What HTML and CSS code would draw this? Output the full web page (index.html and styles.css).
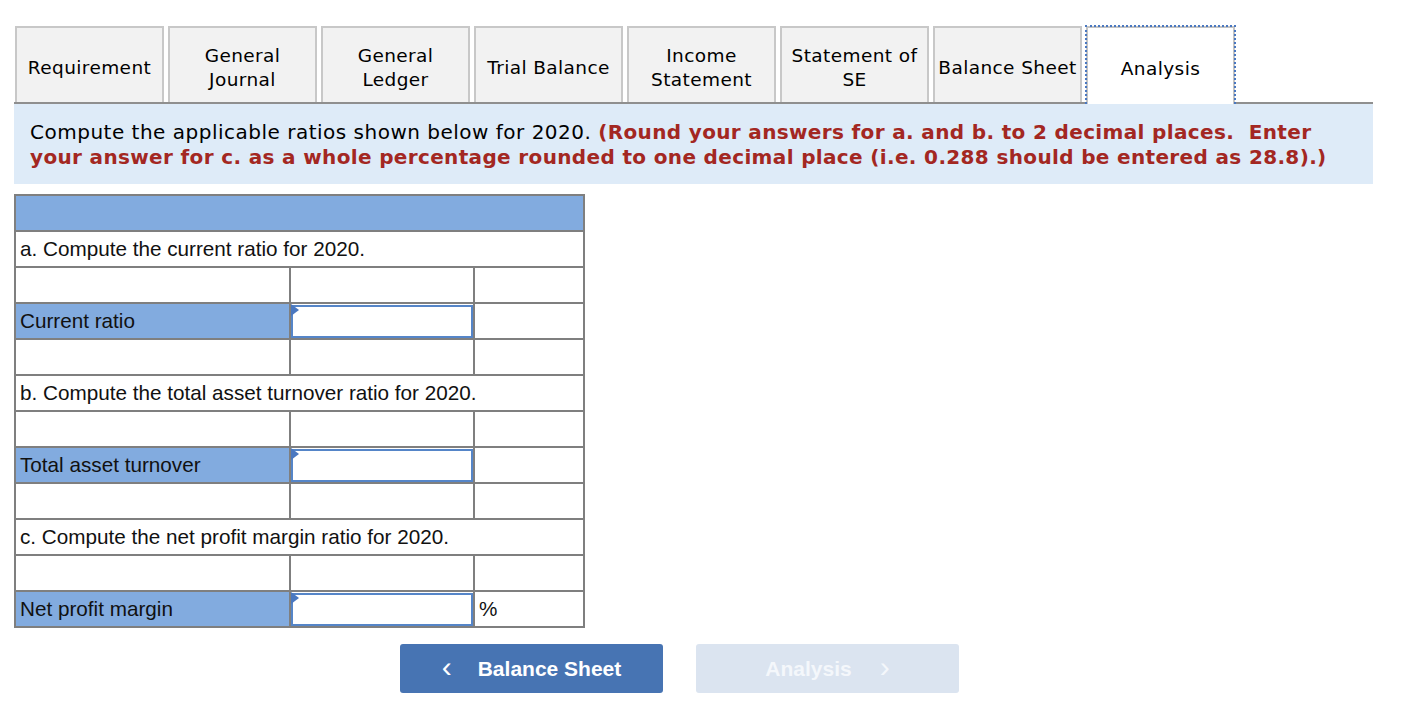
FILE: index.html
```html
<!DOCTYPE html>
<html>
<head>
<meta charset="utf-8">
<link rel="stylesheet" href="styles.css">
</head>
<body>
<div class="page">
  <div class="tabs">
    <div class="tab">Requirement</div>
    <div class="tab">General<br>Journal</div>
    <div class="tab">General<br>Ledger</div>
    <div class="tab">Trial Balance</div>
    <div class="tab">Income<br>Statement</div>
    <div class="tab">Statement of<br>SE</div>
    <div class="tab">Balance Sheet</div>
    <div class="tab active">Analysis</div>
  </div>
  <div class="instructions">
    Compute the applicable ratios shown below for 2020. <strong>(Round your answers for a. and b. to 2 decimal places.&nbsp; Enter your answer for c. as a whole percentage rounded to one decimal place (i.e. 0.288 should be entered as 28.8).)</strong>
  </div>
  <table class="grid">
    <colgroup><col class="c1"><col class="c2"><col class="c3"></colgroup>
    <tr class="head"><td colspan="3"></td></tr>
    <tr><td colspan="3">a. Compute the current ratio for 2020.</td></tr>
    <tr><td></td><td></td><td></td></tr>
    <tr><td class="label">Current ratio</td><td class="inp"><div class="box"></div></td><td></td></tr>
    <tr><td></td><td></td><td></td></tr>
    <tr><td colspan="3">b. Compute the total asset turnover ratio for 2020.</td></tr>
    <tr><td></td><td></td><td></td></tr>
    <tr><td class="label">Total asset turnover</td><td class="inp"><div class="box"></div></td><td></td></tr>
    <tr><td></td><td></td><td></td></tr>
    <tr><td colspan="3">c. Compute the net profit margin ratio for 2020.</td></tr>
    <tr><td></td><td></td><td></td></tr>
    <tr><td class="label">Net profit margin</td><td class="inp"><div class="box"></div></td><td>%</td></tr>
  </table>
  <div class="nav">
    <div class="btn prev"><span class="chev">&lsaquo;</span>Balance Sheet</div>
    <div class="btn next">Analysis<span class="chev">&rsaquo;</span></div>
  </div>
</div>
</body>
</html>
```
FILE: styles.css
```css
html, body { margin: 0; padding: 0; background: #fff; }
.page { padding: 26px 0 0 14px; width: 1359px; }
.tabs {
  display: flex;
  gap: 4px;
  padding-left: 1px;
  border-bottom: 2px solid #8f8f8f;
  height: 76px;
  box-sizing: content-box;
}
.tab {
  flex: 0 0 149px;
  box-sizing: border-box;
  height: 76px;
  padding-top: 6px;
  border: 2px solid #c8c8c8;
  border-bottom: none;
  background: #f2f2f2;
  font-family: "DejaVu Sans", Verdana, sans-serif;
  font-size: 18.5px;
  letter-spacing: 0.4px;
  line-height: 24px;
  color: #000;
  display: flex;
  align-items: center;
  justify-content: center;
  text-align: center;
}
.tab.active {
  background: #fff;
  height: 78px;
  position: relative;
  z-index: 1;
  border-color: #c4c4c4;
}
.tab.active::after {
  content: "";
  position: absolute;
  left: -3px;
  right: -3px;
  top: -3px;
  bottom: 0;
  border: 2px dotted #4a78c0;
  border-bottom: none;
}
.instructions {
  background: #deebf8;
  font-family: "DejaVu Sans", Verdana, sans-serif;
  font-size: 20px;
  letter-spacing: 0.5px;
  line-height: 25px;
  color: #000;
  padding: 16px 16px 16px 16px;
  height: 48px;
}
.instructions strong { color: #a32722; letter-spacing: 0.35px; }
.grid {
  margin-top: 10px;
  border-collapse: collapse;
  border: 2px solid #7f7f7f;
  width: 570px;
  font-family: "Liberation Sans", Arial, sans-serif;
  font-size: 20.7px;
  table-layout: fixed;
}
.c1 { width: 275px; }
.c2 { width: 184px; }
.c3 { width: 110px; }
.grid td {
  border: 2px solid #7f7f7f;
  height: 34px;
  padding: 0 4px;
  color: #111;
  box-sizing: border-box;
}
.grid tr { height: 36px; }
.grid tr.head td { background: #82abdf; }
.grid td.label { background: #82abdf; }
.grid td.inp { padding: 0; position: relative; }
.box {
  margin: 0;
  height: 33px;
  border: 2px solid #5585c8;
  background: #fff;
  box-sizing: border-box;
  width: 182px;
}
.grid td.inp::before {
  content: "";
  position: absolute;
  left: 0;
  top: 0;
  border-left: 8px solid #4a78c0;
  border-top: 6px solid transparent;
  border-bottom: 6px solid transparent;
}
.nav {
  display: flex;
  gap: 33px;
  padding-left: 386px;
  margin-top: 16px;
}
.btn {
  width: 263px;
  height: 49px;
  border-radius: 3px;
  display: flex;
  align-items: center;
  justify-content: center;
  font-family: "Liberation Sans", Arial, sans-serif;
  font-weight: bold;
  font-size: 21px;
  color: #fff;
}
.btn.prev { background: #4774b3; }
.btn.next { background: #dbe4f0; color: #f4f7fb; }
.chev { font-weight: normal; font-size: 30px; line-height: 1; position: relative; top: -2px; }
.prev .chev { margin-right: 26px; }
.next .chev { margin-left: 28px; }
```
